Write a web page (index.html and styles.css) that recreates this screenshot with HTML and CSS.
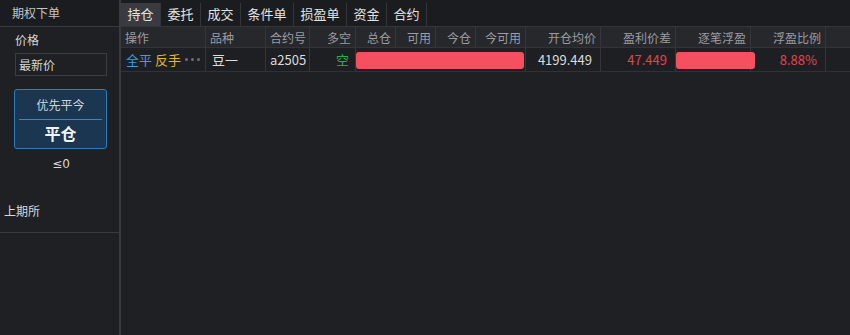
FILE: index.html
```html
<!DOCTYPE html>
<html lang="zh">
<head>
<meta charset="utf-8">
<title>期权下单</title>
<link rel="stylesheet" href="styles.css">
</head>
<body>
<div class="app">
  <aside class="side">
    <div class="side-head">期权下单</div>
    <div class="side-body">
      <div class="label">价格</div>
      <div class="input">最新价</div>
      <div class="btn">
        <div class="btn-top">优先平今</div>
        <div class="btn-main">平仓</div>
      </div>
      <div class="le">≤0</div>
      <div class="exch">上期所</div>
    </div>
    <div class="side-rest"></div>
  </aside>
  <main class="main">
    <div class="tabs">
      <div class="tab active">持仓</div>
      <div class="tab">委托</div>
      <div class="tab">成交</div>
      <div class="tab">条件单</div>
      <div class="tab">损盈单</div>
      <div class="tab">资金</div>
      <div class="tab">合约</div>
    </div>
    <div class="grid">
      <div class="row head">
        <div class="c c1 l">操作</div>
        <div class="c c2 l">品种</div>
        <div class="c c3">合约号</div>
        <div class="c c4">多空</div>
        <div class="c c5">总仓</div>
        <div class="c c6">可用</div>
        <div class="c c7">今仓</div>
        <div class="c c8">今可用</div>
        <div class="c c9">开仓均价</div>
        <div class="c c10">盈利价差</div>
        <div class="c c11">逐笔浮盈</div>
        <div class="c c12">浮盈比例</div>
        <div class="c c13"></div>
      </div>
      <div class="row data">
        <div class="c c1 l ops"><span class="blue">全平</span><span class="yellow">反手</span><span class="dots"><i></i><i></i><i></i></span></div>
        <div class="c c2 l pz">豆一</div>
        <div class="c c3 l">a2505</div>
        <div class="c c4 green">空</div>
        <div class="span-bar">
          <div class="bar bar1"></div>
        </div>
        <div class="c c9 pr">4199.449</div>
        <div class="c c10 pr red">47.449</div>
        <div class="c c11 barcell"><div class="bar bar2"></div></div>
        <div class="c c12 pr red">8.88%</div>
        <div class="c c13"></div>
      </div>
    </div>
  </main>
</div>
</body>
</html>
```
FILE: styles.css
```css
* { box-sizing: border-box; }
html, body { margin: 0; padding: 0; }
body {
  width: 850px;
  height: 335px;
  overflow: hidden;
  background: #1f2024;
  font-family: "Noto Sans CJK SC", "Noto Sans", "Liberation Sans", sans-serif;
  color: #dcdcdc;
  font-size: 12px;
}
.app { display: flex; height: 335px; }

.side {
  width: 121px;
  flex: none;
  border-right: 2px solid #3a3b40;
  display: flex;
  flex-direction: column;
  background: #1f2024;
}
.side-head {
  height: 27px;
  line-height: 26px;
  padding-left: 12px;
  background: #1b1c20;
  border-bottom: 1px solid #38393d;
  color: #c4c4c4;
  font-size: 12px;
}
.side-body {
  height: 206px;
  border-bottom: 1px solid #38393d;
  padding: 0 0 0 15px;
  display: flex;
  flex-direction: column;
  align-items: flex-start;
}
.label { margin-top: 4px; height: 17px; line-height: 17px; color: #d6d6d6; }
.input {
  margin-top: 5px;
  width: 92px;
  height: 23px;
  border: 1px solid #3c3d42;
  line-height: 21px;
  padding-left: 3px;
  color: #d6d6d6;
}
.btn {
  margin-top: 13px;
  margin-left: -1px;
  width: 93px;
  height: 60px;
  border: 1px solid #2d7dbd;
  border-radius: 3px;
  background: #1a3650;
  display: flex;
  flex-direction: column;
  align-items: stretch;
  padding: 0 4px;
}
.btn-top {
  height: 30px;
  line-height: 30px;
  text-align: center;
  color: #d0d4d8;
  border-bottom: 1px solid #2f86c9;
}
.btn-main {
  flex: 1;
  text-align: center;
  line-height: 27px;
  font-size: 16px;
  font-weight: bold;
  color: #f2f2f2;
}
.le {
  margin-top: 7px;
  width: 92px;
  text-align: center;
  color: #d8d8d8;
  font-family: "DejaVu Sans", "Liberation Sans", sans-serif;
  font-size: 12px;
  line-height: 17px;
}
.exch {
  margin-top: 29px;
  margin-left: -11px;
  color: #d8d8d8;
  line-height: 17px;
}
.side-rest { flex: 1; }

.main { flex: 1; display: flex; flex-direction: column; }
.tabs {
  height: 27px;
  padding-top: 3px;
  background: #1b1c1f;
  border-bottom: 1px solid #34353a;
  display: flex;
}
.tab {
  height: 23px;
  line-height: 22px;
  padding: 0 6.5px;
  font-size: 13px;
  color: #e2e2e2;
  border-right: 1px solid #35363a;
}
.tab.active { background: #3a3b40; }

.row { display: flex; }
.row.head {
  height: 21px;
  background: #27282c;
  color: #9a9ca1;
  font-size: 12px;
  line-height: 21px;
  border-bottom: 1px solid #333438;
}
.row.data {
  height: 24px;
  line-height: 23px;
  font-size: 13px;
  border-bottom: 1px solid #313236;
  background: #1e1f23;
}
.c {
  flex: none;
  border-right: 1px solid #35363a;
  text-align: right;
  padding: 0 4px;
  white-space: nowrap;
  overflow: hidden;
}
.c.l { text-align: left; }
.c1 { width: 85px; }
.c2 { width: 60px; }
.c3 { width: 44px; }
.c4 { width: 46px; }
.c5, .c6, .c7 { width: 40px; }
.c8 { width: 50px; }
.c9, .c10, .c11, .c12 { width: 75px; }
.c13 { flex: 1; border-right: none; }
.pr { padding-right: 8px; }
.pz { padding-left: 6px; }
.ops { padding-left: 5px; display: flex; align-items: center; gap: 3px; }
.blue { color: #3e9ce6; }
.yellow { color: #e6b82a; }
.dots { display: flex; gap: 3px; margin-left: 1px; }
.dots i { display: block; width: 3px; height: 3px; border-radius: 50%; background: #6d6f73; }
.green { color: #23b24c; padding-right: 6px; }
.red { color: #e3434f; }
.span-bar {
  width: 170px;
  flex: none;
  border-right: 1px solid #35363a;
  padding: 4px 1px 2px 0;
}
.bar { height: 17px; border-radius: 3px; background: #f4505f; }
.barcell { padding: 4px 0 2px 0; overflow: visible; position: relative; }
.bar2 { width: 79px; }
```
